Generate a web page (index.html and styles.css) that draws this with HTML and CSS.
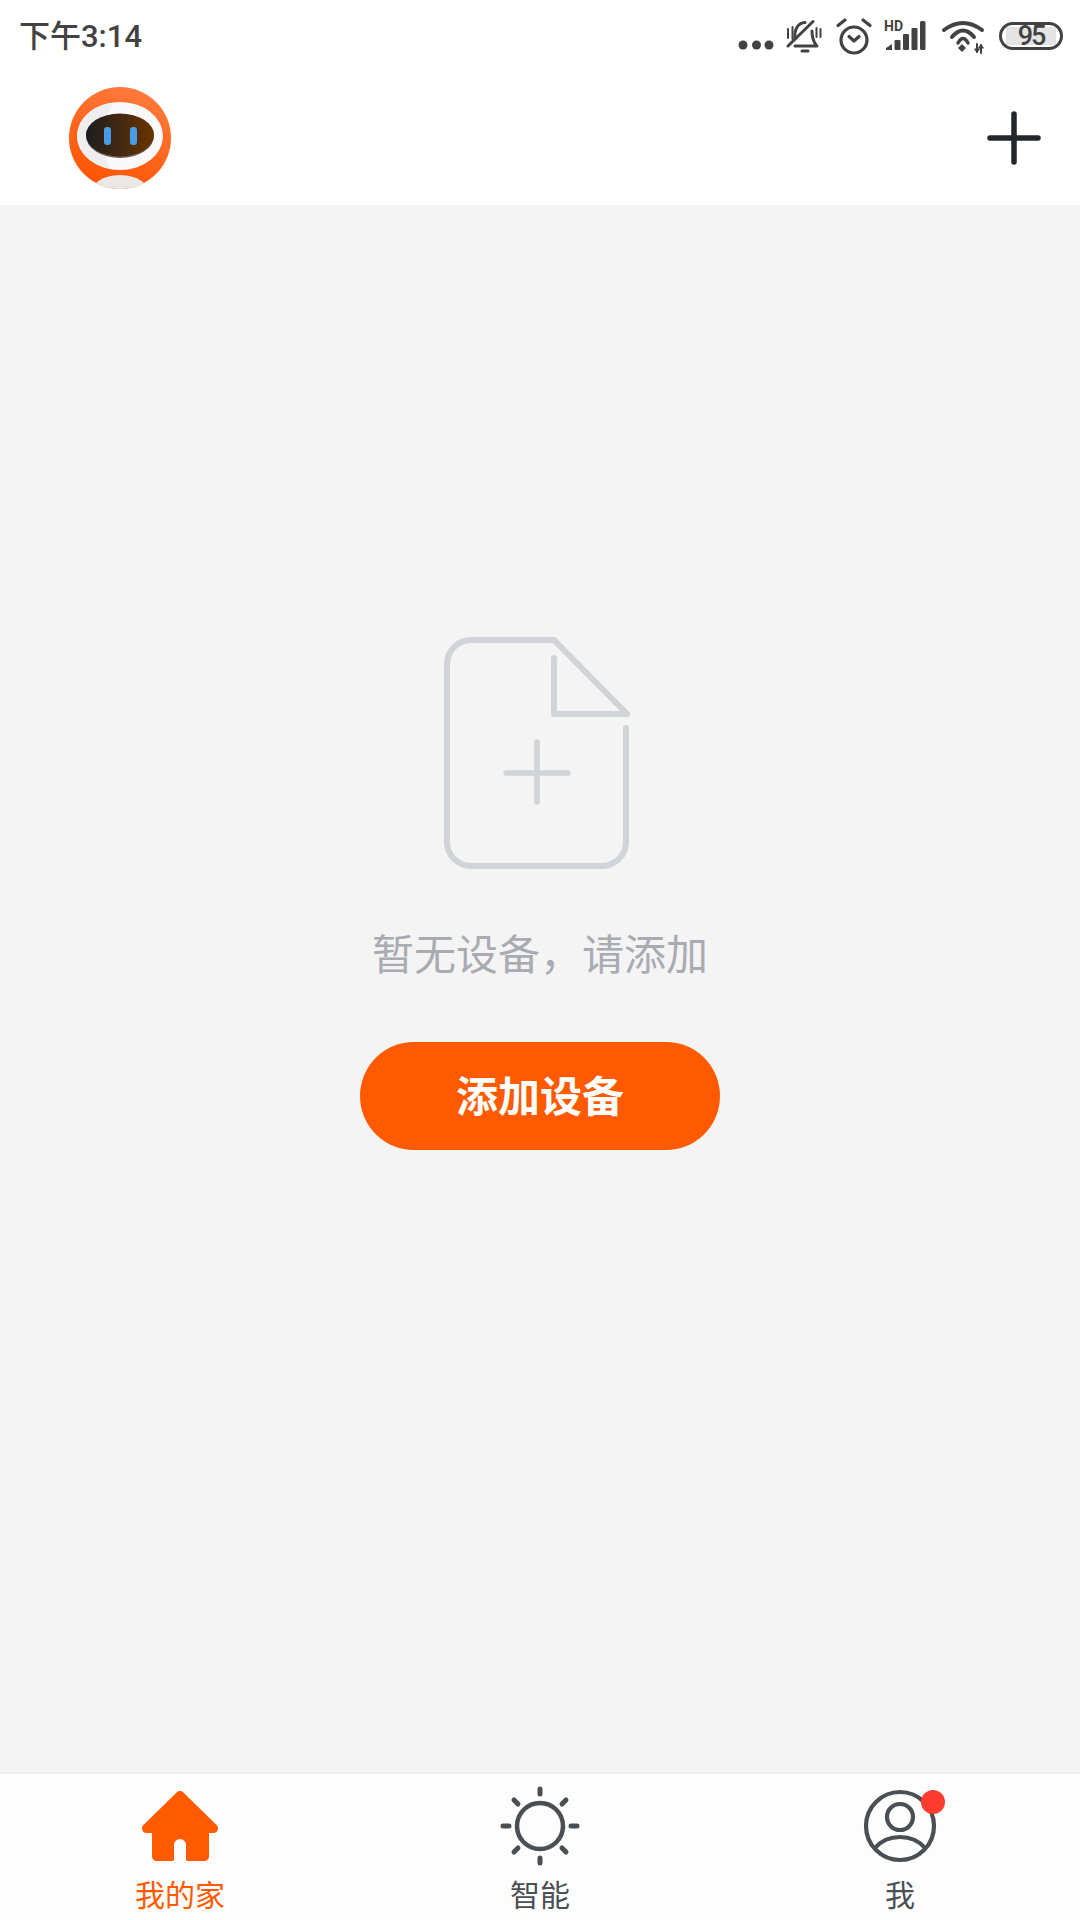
FILE: index.html
```html
<!DOCTYPE html>
<html lang="zh-CN">
<head>
  <meta charset="utf-8">
  <title>我的家</title>
  <link rel="stylesheet" href="styles.css">
</head>
<body>
  <div class="app">
    <div class="status-bar">
      <div class="time">下午3:14</div>
      <div class="status-icons">
        <svg class="ic-dots" width="36" height="10" viewBox="0 0 36 10" fill="#424242"><circle cx="5" cy="5" r="4.500"/><circle cx="18.500" cy="5" r="4.500"/><circle cx="31" cy="5" r="4.500"/></svg>
        <svg class="ic-bell" width="36" height="34" viewBox="0 0 36 34" fill="none" stroke="#424242" stroke-width="3" stroke-linecap="round">
          <path d="M9 19C8 9 12 3 19 2.500"/>
          <path d="M26 11c0 5 1 10 4 14"/>
          <path d="M2 26L27 1.500"/>
          <path d="M9 26h22"/>
          <path d="M16 31h6"/>
          <path d="M2 9v9M6.500 7v12M30.500 8v9M34.500 9v8" stroke-width="2"/>
        </svg>
        <svg class="ic-alarm" width="36" height="36" viewBox="0 0 36 36" fill="none" stroke="#424242" stroke-width="3.200" stroke-linecap="round">
          <circle cx="18" cy="22" r="13"/>
          <path d="M2 7.500L9 2M34 7.500L27 2"/>
          <path d="M13 18.500l5 4.500 5-4.500" stroke-linejoin="round"/>
        </svg>
        <svg class="ic-signal" width="42" height="32" viewBox="0 0 42 32" fill="#424242">
          <text class="hd" x="0" y="11">HD</text>
          <path d="M2 30v-2l6-4v6z"/>
          <rect x="10.500" y="20" width="6" height="10" rx="1"/>
          <rect x="19" y="14" width="6" height="16" rx="1"/>
          <rect x="27.500" y="8" width="6" height="22" rx="1"/>
          <rect x="36" y="1" width="5.500" height="29" rx="1.500"/>
        </svg>
        <svg class="ic-wifi" width="44" height="34" viewBox="0 0 44 34" fill="none" stroke="#424242" stroke-width="4" stroke-linecap="round">
          <path d="M3 9Q22-5 41 9"/>
          <path d="M11 16Q22 3 33 16"/>
          <path d="M17 22Q22 13 27 22" stroke-width="3.500"/>
          <path d="M21 23l4 4-4 4-4-4z" fill="#424242" stroke="none"/>
          <path d="M36 23v8M40 24v8" stroke-width="2"/>
          <path d="M34 28l2 3 2-3M38 27l2-3 2 3" stroke-width="1.500"/>
        </svg>
        <div class="battery"><span class="battery-num">95</span></div>
      </div>
    </div>

    <header class="top-bar">
      <svg class="avatar" width="102" height="102" viewBox="0 0 102 102">
        <defs>
          <linearGradient id="avBg" x1="0.7" y1="0" x2="0.3" y2="1"><stop offset="0" stop-color="#ff7b3e"/><stop offset="1" stop-color="#ff5300"/></linearGradient>
          <linearGradient id="avVisor" x1="0" y1="0" x2="1" y2="0"><stop offset="0" stop-color="#1d1d1f"/><stop offset="1" stop-color="#6b3400"/></linearGradient>
          <clipPath id="avClip"><circle cx="51" cy="51" r="51"/></clipPath>
        </defs>
        <circle cx="51" cy="51" r="51" fill="url(#avBg)"/>
        <ellipse cx="51" cy="49" rx="43" ry="34" fill="#f9f8fa"/>
        <path d="M45 15.500a43 34 0 0 0-37 33.500 43 34 0 0 0 34 33c-8-10-14-40 3-66.500z" fill="#eeedef"/>
        <ellipse cx="51" cy="49" rx="34" ry="22" fill="#6b5a4e"/>
        <ellipse cx="51" cy="48" rx="34" ry="21.500" fill="url(#avVisor)"/>
        <rect x="35" y="40" width="7" height="18" rx="3" fill="#4b9be6"/>
        <rect x="61" y="40" width="7" height="18" rx="3" fill="#4b9be6"/>
        <g clip-path="url(#avClip)"><ellipse cx="51" cy="108" rx="30" ry="20" fill="#ebe7e5"/></g>
      </svg>
      <svg class="add-icon" width="54" height="54" viewBox="0 0 54 54" stroke="#24262e" stroke-width="5.500" stroke-linecap="round">
        <path d="M27 3v48M3 27h48"/>
      </svg>
    </header>

    <main class="content">
      <svg class="empty-icon" width="188" height="232" viewBox="0 0 188 232" fill="none" stroke="#d0d3d8" stroke-width="6" stroke-linecap="round" stroke-linejoin="round">
        <path d="M110 3H27A24 24 0 0 0 3 27v178a24 24 0 0 0 24 24h131a24 24 0 0 0 24-24V91"/>
        <path d="M110 3l73 74H110V21"/>
        <path d="M93 105v60M62 136h62" stroke-width="5.500"/>
      </svg>
      <p class="empty-text">暂无设备，请添加</p>
      <button class="add-btn">添加设备</button>
    </main>

    <nav class="tab-bar">
      <div class="tab active">
        <div class="tab-icon">
          <svg width="76" height="70" viewBox="0 0 76 70"><path d="M38 0c1.300 0 2.500.5 3.400 1.400L74.500 34c1 1 1.500 2 1.500 3.200 0 2.800-2 4.800-4.800 4.800H67v23c0 3-2 5-5 5H46c-1.500 0-2-.5-2-2V54a6 6 0 0 0-12 0v14c0 1.500-.5 2-2 2H15c-3 0-5-2-5-5V42H4.800C2 42 0 40 0 37.200c0-1.200.5-2.200 1.500-3.200L34.600 1.400C35.500.5 36.700 0 38 0z" fill="#ff5a00"/></svg>
        </div>
        <span class="tab-label">我的家</span>
      </div>
      <div class="tab">
        <div class="tab-icon">
          <svg width="80" height="80" viewBox="0 0 80 80" fill="none" stroke="#4a4f54" stroke-width="4.500" stroke-linecap="round">
            <circle cx="40" cy="40" r="23"/>
            <path d="M40 3v5M40 72v5M3 40h6M71 40h6" stroke-width="5"/>
            <path d="M14 14l4 4M66 14l-4 4M14 66l4-4M66 66l-4-4" stroke-width="5"/>
          </svg>
        </div>
        <span class="tab-label">智能</span>
      </div>
      <div class="tab">
        <div class="tab-icon">
          <div class="me-icon">
            <svg width="76" height="76" viewBox="0 0 76 76" fill="none" stroke="#4a4f54" stroke-width="4.200">
              <circle cx="38" cy="38" r="34"/>
              <circle cx="38" cy="29" r="13"/>
              <path d="M13 60c6-7 15-11 25-11s19 4 25 11"/>
            </svg>
            <span class="badge"></span>
          </div>
        </div>
        <span class="tab-label">我</span>
      </div>
    </nav>
  </div>
</body>
</html>
```

FILE: styles.css
```css
html, body {
  margin: 0;
  padding: 0;
}
body {
  font-family: Roboto, "Noto Sans CJK SC", sans-serif;
  background: #f4f4f4;
}
.app {
  width: 1080px;
  height: 1920px;
  display: flex;
  flex-direction: column;
  overflow: hidden;
}
.status-bar {
  height: 66px;
  background: #fff;
  display: flex;
  align-items: flex-start;
  justify-content: space-between;
  padding: 0 17px 0 19px;
  box-sizing: border-box;
}
.time {
  margin-top: 19px;
  font-size: 31px;
  font-weight: 500;
  line-height: 36px;
  color: #424242;
}
.status-icons {
  display: flex;
  align-items: flex-start;
  padding-top: 20px;
}
.status-icons svg {
  display: block;
  flex: none;
  overflow: visible;
}
.ic-dots {
  margin: 20px 0 0 0;
}
.ic-bell {
  margin-left: 12px;
}
.ic-alarm {
  margin: -2px 0 0 14px;
}
.ic-signal {
  margin-left: 12px;
}
.hd {
  font-family: Roboto, sans-serif;
  font-size: 14px;
  font-weight: 700;
}
.ic-wifi {
  margin: 1px 0 0 15px;
}
.battery {
  width: 64px;
  height: 28px;
  margin: 2px 0 0 14px;
  box-sizing: border-box;
  border: 3px solid #424242;
  border-radius: 14px;
  display: flex;
  align-items: center;
  justify-content: center;
  background: linear-gradient(#e4e4e4, #e4e4e4) center / 50px 18px no-repeat;
}
.battery-num {
  font-size: 27px;
  font-weight: 500;
  line-height: 22px;
  letter-spacing: -2px;
  color: #424242;
}
.top-bar {
  height: 139px;
  background: #fff;
  display: flex;
  align-items: center;
  justify-content: space-between;
  padding: 0 39px 0 69px;
  box-sizing: border-box;
}
.avatar {
  display: block;
  margin-top: 5px;
}
.add-icon {
  display: block;
  margin-top: 5px;
}
.content {
  flex: 1;
  display: flex;
  flex-direction: column;
  align-items: center;
  padding-top: 432px;
}
.empty-icon {
  display: block;
  margin-left: -5px;
}
.empty-text {
  margin: 62px 0 0;
  font-size: 42px;
  line-height: 50px;
  color: #a9abb2;
}
.add-btn {
  margin-top: 61px;
  width: 360px;
  height: 108px;
  padding: 0 0 6px;
  border: none;
  border-radius: 54px;
  background: #ff5a00;
  color: #fff;
  font-family: inherit;
  font-size: 42px;
  font-weight: 700;
}
.tab-bar {
  height: 148px;
  flex: none;
  display: grid;
  grid-template-columns: repeat(3, 1fr);
  background: #fdfdfd;
  border-top: 2px solid #eeeeee;
  box-sizing: border-box;
}
.tab {
  display: flex;
  flex-direction: column;
  align-items: center;
  padding-top: 12px;
}
.tab-icon {
  height: 80px;
  display: flex;
  align-items: center;
  justify-content: center;
}
.tab-icon svg {
  display: block;
}
.tab-label {
  font-size: 30px;
  line-height: 38px;
  color: #4a4f54;
  margin-top: 11px;
}
.tab.active .tab-label {
  color: #ff5a00;
}
.me-icon {
  position: relative;
}
.badge {
  position: absolute;
  top: 2px;
  right: -7px;
  width: 24px;
  height: 24px;
  border-radius: 50%;
  background: #ff3b30;
}
```
